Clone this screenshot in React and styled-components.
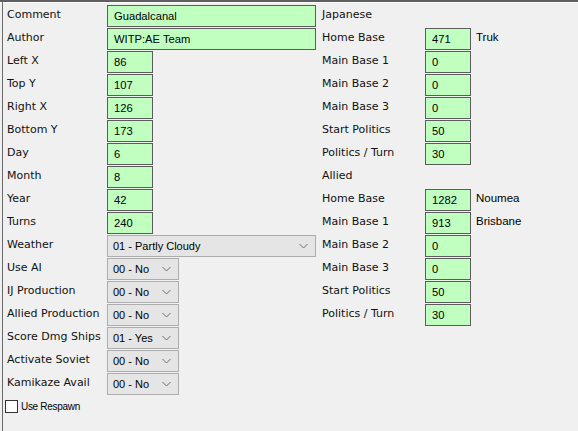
import React from 'react';
import styled, { createGlobalStyle } from 'styled-components';

const GlobalStyle = createGlobalStyle`
  html, body {
    margin: 0;
    padding: 0;
    background: #f0f0f0;
  }
`;

const Page = styled.div`
  width: 578px;
  height: 431px;
  box-sizing: border-box;
  background: #f0f0f0;
  border-top: 2px solid #5f5f5f;
  box-shadow: inset 0 1px 0 #ffffff;
  overflow: hidden;
`;

const Frame = styled.div`
  display: flex;
  margin-left: 2px;
  border-left: 1px solid #6a6a6a;
  height: 100%;
  padding-top: 3px;
  box-sizing: border-box;
`;

const Column = styled.div`
  display: grid;
  grid-template-columns: ${p => p.cols};
  grid-auto-rows: 23px;
  align-items: start;
  width: ${p => p.width}px;
  padding-left: ${p => p.pad}px;
  box-sizing: border-box;
`;

const Label = styled.div`
  font-family: "DejaVu Sans", "Noto Sans", sans-serif;
  font-size: 11px;
  color: #111;
  height: 21px;
  line-height: 19px;
  white-space: nowrap;
`;

const TextBox = styled.div`
  box-sizing: border-box;
  width: ${p => p.w}px;
  height: 22px;
  background: #c0ffc0;
  border: 1px solid #5c5c5c;
  font-family: "Liberation Sans", Arial, sans-serif;
  font-size: 11.2px;
  color: #000;
  line-height: 20px;
  padding-left: 6px;
  white-space: nowrap;
  overflow: hidden;
`;

const Note = styled.div`
  font-family: "Liberation Sans", Arial, sans-serif;
  font-size: 11.5px;
  color: #000;
  line-height: 18px;
  padding-left: 3px;
  white-space: nowrap;
`;

const Select = styled.div`
  box-sizing: border-box;
  width: ${p => p.w}px;
  height: 22px;
  background: #e5e5e5;
  border: 1px solid #adadad;
  font-family: "Liberation Sans", Arial, sans-serif;
  font-size: 11px;
  color: #000;
  display: flex;
  align-items: center;
  justify-content: space-between;
  padding: 0 7px 0 5px;
  white-space: nowrap;
`;

const Empty = styled.div``;

const Span = styled.div`
  grid-column: ${p => p.span};
`;

const CheckRow = styled.div`
  display: flex;
  align-items: center;
  gap: 3px;
  grid-column: 1 / span 2;
  margin-left: -2px;
  padding-top: 4px;
  font-family: "Liberation Sans", Arial, sans-serif;
  font-size: 10px;
  letter-spacing: -0.3px;
  color: #000;
`;

const Box = styled.div`
  width: 13px;
  height: 13px;
  box-sizing: border-box;
  background: #fff;
  border: 1px solid #333;
`;

const Chevron = () => (
  <svg width="9" height="6" viewBox="0 0 9 6">
    <path d="M0.5 1 L4.5 5 L8.5 1" fill="none" stroke="#6f6f6f" strokeWidth="1" />
  </svg>
);

const DropDown = ({ w, children }) => (
  <Select w={w}>
    <span>{children}</span>
    <Chevron />
  </Select>
);

const leftFields = [
  ['Comment', 'Guadalcanal', 209],
  ['Author', 'WITP:AE Team', 209],
  ['Left X', '86', 46],
  ['Top Y', '107', 46],
  ['Right X', '126', 46],
  ['Bottom Y', '173', 46],
  ['Day', '6', 46],
  ['Month', '8', 46],
  ['Year', '42', 46],
  ['Turns', '240', 46],
];

const leftSelects = [
  ['Use AI', '00 - No'],
  ['IJ Production', '00 - No'],
  ['Allied Production', '00 - No'],
  ['Score Dmg Ships', '01 - Yes'],
  ['Activate Soviet', '00 - No'],
  ['Kamikaze Avail', '00 - No'],
];

const japanese = [
  ['Home Base', '471', 'Truk'],
  ['Main Base 1', '0'],
  ['Main Base 2', '0'],
  ['Main Base 3', '0'],
  ['Start Politics', '50'],
  ['Politics / Turn', '30'],
];

const allied = [
  ['Home Base', '1282', 'Noumea'],
  ['Main Base 1', '913', 'Brisbane'],
  ['Main Base 2', '0'],
  ['Main Base 3', '0'],
  ['Start Politics', '50'],
  ['Politics / Turn', '30'],
];

const SideRows = ({ rows }) =>
  rows.map(([label, value, note]) => (
    <React.Fragment key={label + value}>
      <Label>{label}</Label>
      <TextBox w={46}>{value}</TextBox>
      {note ? <Note>{note}</Note> : <Empty />}
    </React.Fragment>
  ));

export default function App() {
  return (
    <Page>
      <GlobalStyle />
      <Frame>
        <Column cols="100px 1fr" width={319} pad={4}>
          {leftFields.map(([label, value, w]) => (
            <React.Fragment key={label}>
              <Label>{label}</Label>
              <TextBox w={w}>{value}</TextBox>
            </React.Fragment>
          ))}
          <Label>Weather</Label>
          <DropDown w={209}>01 - Partly Cloudy</DropDown>
          {leftSelects.map(([label, value]) => (
            <React.Fragment key={label}>
              <Label>{label}</Label>
              <DropDown w={72}>{value}</DropDown>
            </React.Fragment>
          ))}
          <CheckRow>
            <Box />
            <span>Use Respawn</span>
          </CheckRow>
        </Column>
        <Column cols="103px 48px 1fr" width={256} pad={0}>
          <Span span="1 / span 3">
            <Label>Japanese</Label>
          </Span>
          <SideRows rows={japanese} />
          <Span span="1 / span 3">
            <Label>Allied</Label>
          </Span>
          <SideRows rows={allied} />
        </Column>
      </Frame>
    </Page>
  );
}
